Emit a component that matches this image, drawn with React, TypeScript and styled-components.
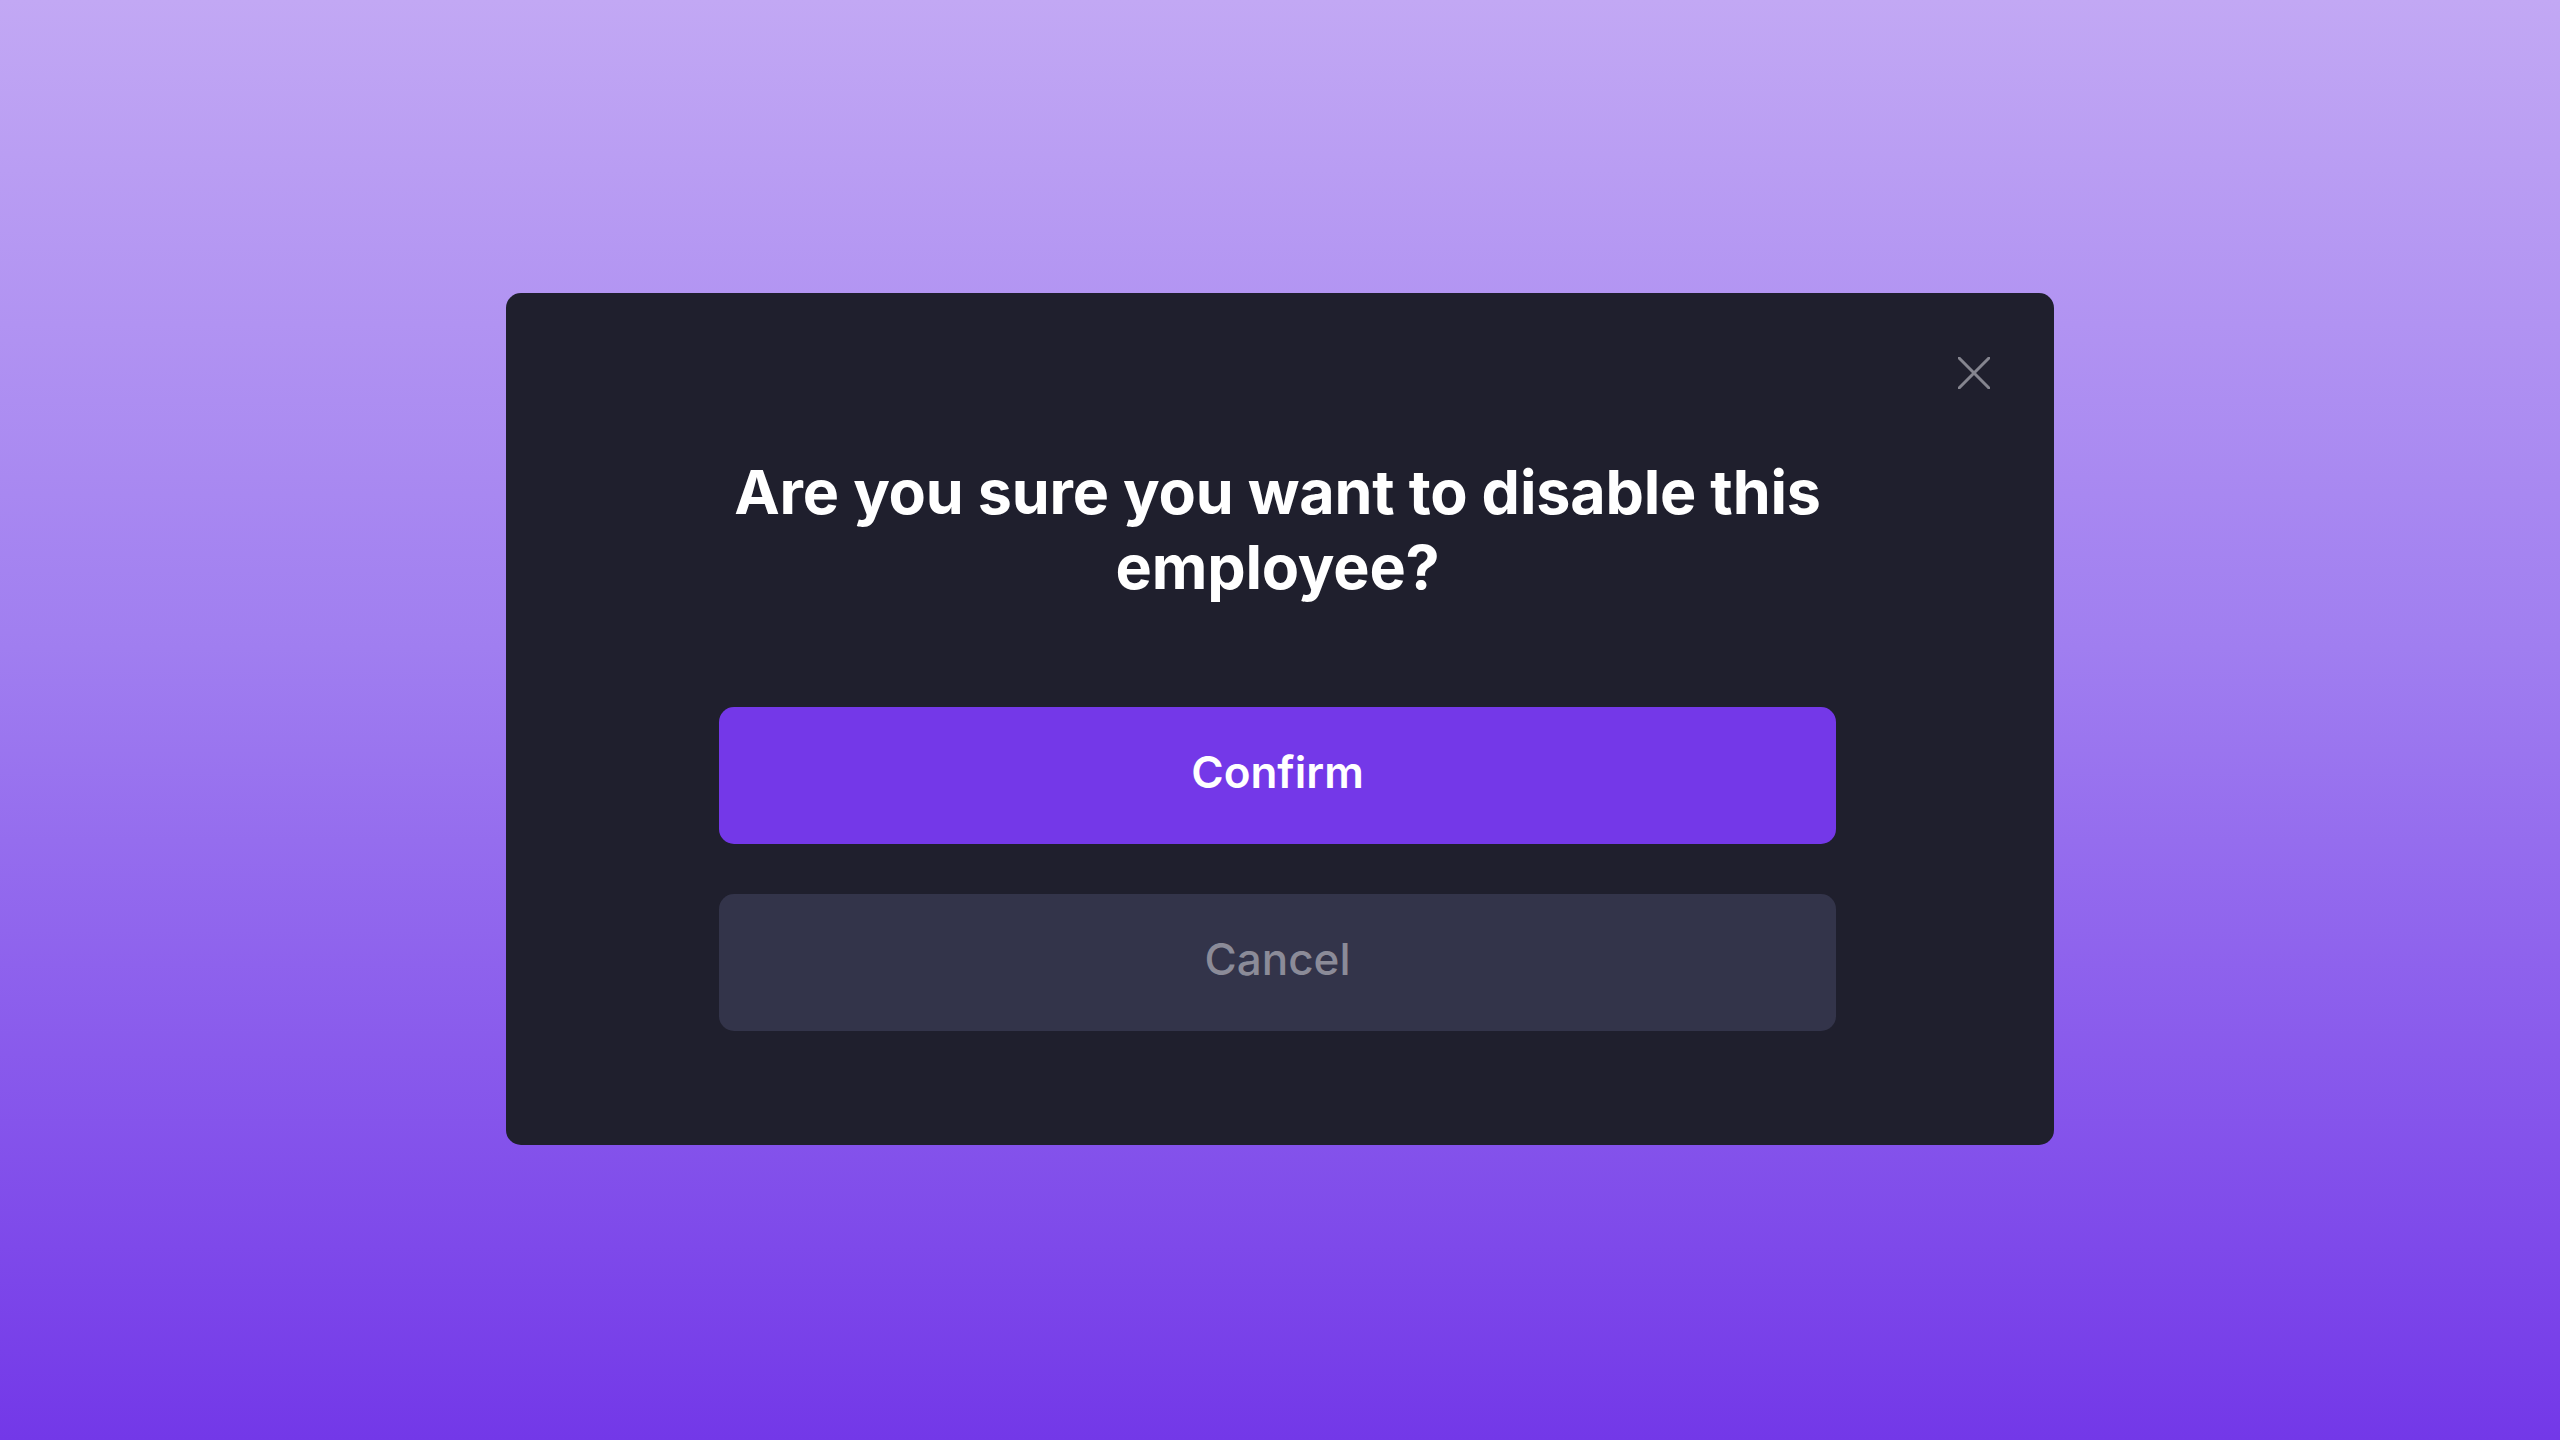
import React from "react";
import styled, { createGlobalStyle } from "styled-components";

const GlobalStyle = createGlobalStyle`
  html, body {
    margin: 0;
    padding: 0;
  }
  body {
    font-family: Inter, "Noto Sans", "Liberation Sans", sans-serif;
  }
  * {
    box-sizing: border-box;
  }
`;

const Page = styled.div`
  width: 100%;
  min-height: 100vh;
  padding-bottom: 3px;
  display: flex;
  align-items: center;
  justify-content: center;
  background: linear-gradient(180deg, #c2a8f4 0%, #a07ef0 45%, #7338e8 100%);
`;

const Modal = styled.div`
  position: relative;
  width: 1548px;
  background: #1f1f2d;
  border-radius: 15px;
  padding: 162px 5px 114px 0;
  display: flex;
  flex-direction: column;
  align-items: center;
`;

const CloseButton = styled.button`
  position: absolute;
  top: 56px;
  right: 56px;
  width: 48px;
  height: 48px;
  border: none;
  background: transparent;
  padding: 0;
  display: flex;
  align-items: center;
  justify-content: center;
  cursor: pointer;
`;

const Title = styled.h2`
  margin: 0;
  max-width: 1117px;
  text-align: center;
  color: #ffffff;
  font-size: 61px;
  line-height: 75px;
  font-weight: 700;
  letter-spacing: -0.2px;
`;

const Actions = styled.div`
  margin-top: 102px;
  width: 1117px;
  display: flex;
  flex-direction: column;
  gap: 50px;
`;

const ActionButton = styled.button<{ $primary?: boolean }>`
  height: 137px;
  width: 100%;
  border: none;
  border-radius: 15px;
  padding: 0 0 6px;
  font-family: inherit;
  font-size: 44px;
  font-weight: ${(p) => (p.$primary ? 600 : 500)};
  color: ${(p) => (p.$primary ? "#ffffff" : "#8b8b98")};
  background: ${(p) => (p.$primary ? "#7438e8" : "#33344a")};
  cursor: pointer;
`;

const CloseIcon = () => (
  <svg width="32" height="32" viewBox="0 0 32 32" fill="none">
    <path
      d="M1 1L31 31M31 1L1 31"
      stroke="#85858f"
      strokeWidth="3"
      strokeLinecap="round"
    />
  </svg>
);

const App: React.FC = () => {
  return (
    <>
      <GlobalStyle />
      <Page>
        <Modal>
          <CloseButton aria-label="Close">
            <CloseIcon />
          </CloseButton>
          <Title>Are you sure you want to disable this employee?</Title>
          <Actions>
            <ActionButton $primary>Confirm</ActionButton>
            <ActionButton>Cancel</ActionButton>
          </Actions>
        </Modal>
      </Page>
    </>
  );
};

export default App;
